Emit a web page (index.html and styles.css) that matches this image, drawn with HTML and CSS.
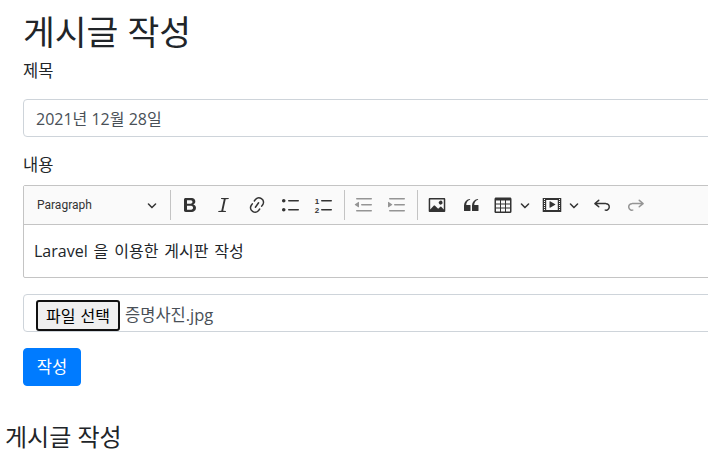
FILE: index.html
```html
<!DOCTYPE html>
<html lang="ko">
<head>
  <meta charset="UTF-8">
  <title>게시글 작성</title>
  <link rel="stylesheet" href="styles.css">
</head>
<body>
  <div class="container">
    <h1>게시글 작성</h1>
    <form>
      <div class="form-group">
        <label class="title-label" for="title">제목</label>
        <input type="text" id="title" class="form-control" value="2021년 12월 28일">
      </div>

      <div class="form-group">
        <label>내용</label>
        <div class="editor">
          <div class="toolbar">
            <div class="heading-select">
              <span>Paragraph</span>
              <svg class="arrow" viewBox="0 0 10 10"><path d="M.941 4.523a.75.75 0 1 1 1.06-1.06l3.006 3.005 3.005-3.005a.75.75 0 1 1 1.06 1.06l-3.549 3.55a.75.75 0 0 1-1.168-.136L.941 4.523z"/></svg>
            </div>
            <span class="sep"></span>
            <button type="button" class="tool"><svg viewBox="0 0 20 20"><path d="M10.187 17H5.773c-.637 0-1.092-.138-1.364-.415-.273-.277-.409-.718-.409-1.323V4.738c0-.617.14-1.062.419-1.332.279-.27.73-.406 1.354-.406h4.68c.69 0 1.288.041 1.793.124.506.083.96.242 1.36.478.341.197.644.447.906.75a3.262 3.262 0 0 1 .808 2.162c0 1.401-.722 2.426-2.167 3.075C15.05 10.175 16 11.315 16 13.01a3.756 3.756 0 0 1-2.296 3.504 6.1 6.1 0 0 1-1.517.377c-.571.073-1.238.11-2 .11zm-.217-6.217H7v4.087h3.069c1.977 0 2.965-.69 2.965-2.072 0-.707-.256-1.22-.768-1.537-.512-.319-1.277-.478-2.296-.478zM7 5.13v3.619h2.606c.729 0 1.292-.067 1.69-.2a1.6 1.6 0 0 0 .91-.765c.165-.267.247-.566.247-.897 0-.707-.26-1.176-.778-1.409-.519-.232-1.31-.348-2.375-.348H7z"/></svg></button>
            <button type="button" class="tool"><svg viewBox="0 0 20 20"><path d="M8.2 3h7.6l-.2 1.1-2.9.1L10.2 15.8l2.8.1-.2 1.1H5.2l.2-1.1 2.9-.1L10.8 4.2l-2.8-.1z"/></svg></button>
            <button type="button" class="tool"><svg viewBox="0 0 20 20"><path d="m11.077 15 .991-1.416a.75.75 0 1 1 1.229.86l-1.148 1.64a.748.748 0 0 1-.217.206 5.251 5.251 0 0 1-8.503-5.955.741.741 0 0 1 .12-.274l1.147-1.639a.75.75 0 1 1 1.228.86L4.933 10.7l.006.003a3.75 3.75 0 0 0 6.132 4.294l.006.004zm5.494-5.335a.748.748 0 0 1-.12.274l-1.147 1.639a.75.75 0 1 1-1.228-.86l.86-1.23a3.75 3.75 0 0 0-6.144-4.301l-.86 1.229a.75.75 0 0 1-1.229-.86l1.148-1.64a.748.748 0 0 1 .217-.206 5.251 5.251 0 0 1 8.503 5.955zm-4.563-2.532a.75.75 0 0 1 .184 1.045l-3.155 4.505a.75.75 0 1 1-1.229-.86l3.155-4.506a.75.75 0 0 1 1.045-.184z"/></svg></button>
            <button type="button" class="tool"><svg viewBox="0 0 20 20"><path d="M7 5.75c0 .414.336.75.75.75h9.5a.75.75 0 1 0 0-1.5h-9.5a.75.75 0 0 0-.75.75zm-6 0C1 4.784 1.777 4 2.75 4c.966 0 1.75.777 1.75 1.75 0 .966-.777 1.75-1.75 1.75C1.784 7.5 1 6.723 1 5.75zm6 9c0 .414.336.75.75.75h9.5a.75.75 0 1 0 0-1.5h-9.5a.75.75 0 0 0-.75.75zm-6 0c0-.966.777-1.75 1.75-1.75.966 0 1.75.777 1.75 1.75 0 .966-.777 1.75-1.75 1.75-.966 0-1.75-.777-1.75-1.75z"/></svg></button>
            <button type="button" class="tool"><svg viewBox="0 0 20 20"><path d="M7 5.75c0 .414.336.75.75.75h9.5a.75.75 0 1 0 0-1.5h-9.5a.75.75 0 0 0-.75.75zm0 9c0 .414.336.75.75.75h9.5a.75.75 0 1 0 0-1.5h-9.5a.75.75 0 0 0-.75.75z"/><text x="3" y="8.5" class="num">1</text><text x="3" y="17.5" class="num">2</text></svg></button>
            <span class="sep"></span>
            <button type="button" class="tool off"><svg viewBox="0 0 20 20"><path d="M2 3.75c0 .414.336.75.75.75h14.5a.75.75 0 1 0 0-1.5H2.75a.75.75 0 0 0-.75.75zm5 6c0 .414.336.75.75.75h9.5a.75.75 0 1 0 0-1.5h-9.5a.75.75 0 0 0-.75.75zM2.75 16.5h14.5a.75.75 0 1 0 0-1.5H2.75a.75.75 0 1 0 0 1.5zM4.368 6.95.98 9.358a.4.4 0 0 0 .013.661l3.39 2.207A.4.4 0 0 0 5 11.892V7.275a.4.4 0 0 0-.632-.326z"/></svg></button>
            <button type="button" class="tool off"><svg viewBox="0 0 20 20"><path d="M2 3.75c0 .414.336.75.75.75h14.5a.75.75 0 1 0 0-1.5H2.75a.75.75 0 0 0-.75.75zm5 6c0 .414.336.75.75.75h9.5a.75.75 0 1 0 0-1.5h-9.5a.75.75 0 0 0-.75.75zM2.75 16.5h14.5a.75.75 0 1 0 0-1.5H2.75a.75.75 0 1 0 0 1.5zM1.632 6.95 5.02 9.358a.4.4 0 0 1-.013.661l-3.39 2.207A.4.4 0 0 1 1 11.892V7.275a.4.4 0 0 1 .632-.326z"/></svg></button>
            <span class="sep"></span>
            <button type="button" class="tool"><svg viewBox="0 0 20 20"><path d="M6.91 10.54c.26-.23.64-.21.88.03l3.36 3.14 2.23-2.06a.64.64 0 0 1 .87 0l2.52 2.97V4.5H3.2v10.12l3.71-4.08zm10.27-7.51c.6 0 1.09.47 1.09 1.05v11.84c0 .59-.49 1.06-1.09 1.06H2.79c-.6 0-1.09-.47-1.09-1.06V4.08c0-.58.49-1.05 1.1-1.05h14.38zm-5.22 5.56a1.96 1.96 0 1 1 3.4-1.96 1.96 1.96 0 0 1-3.4 1.96z"/></svg></button>
            <button type="button" class="tool"><svg viewBox="0 0 20 20"><path d="M3 10.423a6.5 6.5 0 0 1 6.056-6.408l.038.67C6.448 5.423 5.354 7.663 5.22 10H9c.552 0 .5.432.5.986v4.511c0 .554-.448.503-1 .503h-5c-.552 0-.5-.449-.5-1.003v-4.574zm8 0a6.5 6.5 0 0 1 6.056-6.408l.038.67c-2.646.739-3.74 2.979-3.873 5.315H17c.552 0 .5.432.5.986v4.511c0 .554-.448.503-1 .503h-5c-.552 0-.5-.449-.5-1.003v-4.574z"/></svg></button>
            <button type="button" class="tool split"><svg viewBox="0 0 20 20"><path d="M3 5.5v3h4v-3H3zm0 4v3h4v-3H3zm0 4v3h4v-3H3zm5 3h4v-3H8v3zm5 0h4v-3h-4v3zm4-4v-3h-4v3h4zm0-4v-3h-4v3h4zm1.5 8a1.5 1.5 0 0 1-1.5 1.5H3A1.5 1.5 0 0 1 1.5 16V4c0-.828.672-1.5 1.5-1.5h14c.828 0 1.5.672 1.5 1.5v12zM8 8.5h4v-3H8v3zm0 4h4v-3H8v3z"/></svg><svg class="arrow" viewBox="0 0 10 10"><path d="M.941 4.523a.75.75 0 1 1 1.06-1.06l3.006 3.005 3.005-3.005a.75.75 0 1 1 1.06 1.06l-3.549 3.55a.75.75 0 0 1-1.168-.136L.941 4.523z"/></svg></button>
            <button type="button" class="tool split"><svg viewBox="0 0 20 20"><path d="M18.68 3.03c.6 0 .59-.03.59.55v12.84c0 .59.01.56-.59.56H1.29c-.6 0-.59.03-.59-.56V3.58c0-.58-.01-.55.6-.55h17.38zM15.77 15V5H4.2v10h11.57zM2 4v1h1V4H2zm0 2v1h1V6H2zm0 2v1h1V8H2zm0 2v1h1v-1H2zm0 2v1h1v-1H2zm0 2v1h1v-1H2zm15-10v1h1V4h-1zm0 2v1h1V6h-1zm0 2v1h1V8h-1zm0 2v1h1v-1h-1zm0 2v1h1v-1h-1zm0 2v1h1v-1h-1zM7.5 6.677a.4.4 0 0 1 .593-.351l5.133 2.824a.4.4 0 0 1 0 .7l-5.133 2.824a.4.4 0 0 1-.593-.35V6.676z"/></svg><svg class="arrow" viewBox="0 0 10 10"><path d="M.941 4.523a.75.75 0 1 1 1.06-1.06l3.006 3.005 3.005-3.005a.75.75 0 1 1 1.06 1.06l-3.549 3.55a.75.75 0 0 1-1.168-.136L.941 4.523z"/></svg></button>
            <button type="button" class="tool"><svg viewBox="0 0 20 20"><path d="m5.042 9.367 2.189 1.837a.75.75 0 0 1-.965 1.149l-3.788-3.18a.747.747 0 0 1-.21-.284.75.75 0 0 1 .17-.945L6.23 4.762a.75.75 0 1 1 .964 1.15L4.863 7.866h8.917A.75.75 0 0 1 14 7.9a4 4 0 1 1-1.477 7.718l.344-1.489a2.5 2.5 0 1 0 1.094-4.73l.008-.032H5.042z"/></svg></button>
            <button type="button" class="tool off"><svg viewBox="0 0 20 20"><path d="m14.958 9.367-2.189 1.837a.75.75 0 0 0 .965 1.149l3.788-3.18a.747.747 0 0 0 .21-.284.75.75 0 0 0-.17-.945L13.77 4.762a.75.75 0 1 0-.964 1.15l2.331 1.955H6.22A.75.75 0 0 0 6 7.9a4 4 0 1 0 1.477 7.718l-.344-1.489A2.5 2.5 0 1 1 6.039 9.4l-.008-.032h8.927z"/></svg></button>
          </div>
          <div class="editor-body">
            <p>Laravel 을 이용한 게시판 작성</p>
          </div>
        </div>
      </div>

      <div class="form-group">
        <div class="form-control file-field">
          <button type="button" class="file-btn">파일 선택</button>
          <span class="file-name">증명사진.jpg</span>
        </div>
      </div>

      <button type="submit" class="btn-primary">작성</button>
    </form>
  </div>

  <h3 class="footer-title">게시글 작성</h3>
</body>
</html>
```
FILE: styles.css
```css
html {
  overflow: hidden;
}
body {
  margin: 0;
  width: 1150px;
  font-family: "Open Sans", "Noto Sans CJK KR", sans-serif;
  font-size: 16px;
  line-height: 1.5;
  color: #212529;
  background: #fff;
}
.container {
  padding-left: 23px;
}
h1 {
  margin: 0 0 2px;
  padding-top: 7px;
  font-size: 34.6px;
  font-weight: 400;
  line-height: 50px;
}
label {
  display: block;
  height: 24px;
  margin-bottom: 8px;
  font-size: 16.5px;
}
.title-label {
  margin-bottom: 16px;
}
.form-group {
  margin-bottom: 16px;
}
.form-control {
  display: block;
  box-sizing: border-box;
  width: 100%;
  height: 38px;
  padding: 6px 12px;
  font: inherit;
  color: #495057;
  background: #fff;
  border: 1px solid #ced4da;
  border-radius: 4px;
}

/* editor */
.editor {
  border: 1px solid #c4c4c4;
  border-radius: 2px;
}
.toolbar {
  display: flex;
  align-items: center;
  height: 38px;
  padding-left: 6px;
  background: #fafafa;
  border-bottom: 1px solid #c4c4c4;
}
.heading-select {
  display: flex;
  align-items: center;
  justify-content: space-between;
  box-sizing: border-box;
  width: 137px;
  padding: 0 10px 0 7px;
  font-family: Roboto, sans-serif;
  font-size: 12px;
  color: #333;
}
.arrow {
  width: 10px;
  height: 10px;
  fill: #333;
}
.sep {
  flex: none;
  width: 1px;
  height: 30px;
  margin: 0 2px 0 3px;
  background: #c4c4c4;
}
.tool {
  display: flex;
  flex: none;
  align-items: center;
  justify-content: center;
  gap: 7px;
  width: 33.6px;
  height: 30px;
  padding: 0;
  background: none;
  border: 0;
}
.tool svg:not(.arrow) {
  flex: none;
  width: 20px;
  height: 20px;
  fill: #333;
}
.tool.split {
  width: 49px;
}
.tool.off svg:not(.arrow) {
  opacity: .5;
}
.num {
  font-family: "Liberation Sans", sans-serif;
  font-size: 8px;
  font-weight: 700;
  text-anchor: middle;
}
.editor-body {
  height: 52px;
  padding: 0 10px;
}
.editor-body p {
  margin: 0;
  padding-top: 15px;
  line-height: 22px;
  word-spacing: 1.75px;
}

/* file input */
.file-field {
  display: flex;
  align-items: center;
  padding: 5px 12px 0;
}
.file-btn {
  flex: none;
  height: 31px;
  padding: 0 8px;
  font: inherit;
  color: #000;
  background: #efefef;
  border: 2px solid #101010;
  border-radius: 3px;
  white-space: nowrap;
  word-spacing: 1px;
}
.file-name {
  margin-left: 5px;
  font-size: 16.5px;
}

.btn-primary {
  display: block;
  width: 58px;
  height: 38px;
  padding: 0;
  font: inherit;
  font-size: 16.5px;
  color: #fff;
  background: #007bff;
  border: 1px solid #007bff;
  border-radius: 4px;
}
.footer-title {
  margin: 34px 0 0 5px;
  font-size: 24px;
  font-weight: 400;
  line-height: 34px;
}
```
